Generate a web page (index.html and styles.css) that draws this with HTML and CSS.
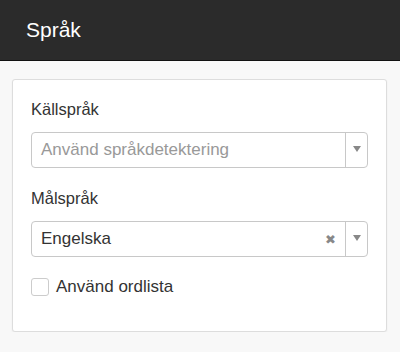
FILE: index.html
```html
<!DOCTYPE html>
<html lang="sv">
<head>
    <meta charset="UTF-8">
    <meta name="viewport" content="width=device-width, initial-scale=1.0">
    <title>Språk</title>
    <link rel="stylesheet" href="styles.css">
</head>
<body>

<div class="header">
    <h1 class="header-title">Språk</h1>
</div>

<div class="card">
    <!-- Källspråk -->
    <label class="field-label">Källspråk</label>
    <div class="select">
        <span class="select-value placeholder">Använd språkdetektering</span>
        <span class="select-arrow"></span>
    </div>

    <!-- Målspråk -->
    <label class="field-label">Målspråk</label>
    <div class="select">
        <span class="select-value">Engelska</span>
        <span class="select-clear">&#x2716;</span>
        <span class="select-arrow"></span>
    </div>

    <label class="check-row">
        <span class="checkbox"></span>
        <span>Använd ordlista</span>
    </label>
</div>

</body>
</html>
```

FILE: styles.css
```css
body {
    margin: 0;
    font-family: "Liberation Sans", Arial, sans-serif;
    background-color: #f8f8f8;
    color: #333;
}

.header {
    height: 60px;
    background-color: #2b2b2b;
    border-bottom: 1px solid #111;
    display: flex;
    align-items: center;
    padding-left: 26px;
}

.header-title {
    margin: 0;
    font-size: 21px;
    font-weight: normal;
    color: #fff;
}

.card {
    margin: 18px 13px 0 12px;
    padding: 18px 18px 34px 18px;
    background-color: #fff;
    border: 1px solid #ddd;
    border-radius: 3px;
    box-shadow: 0 1px 2px rgba(0, 0, 0, 0.06);
    display: flex;
    flex-direction: column;
}

.field-label {
    font-size: 16.5px;
    line-height: 22px;
    color: #333;
}

.select {
    margin-top: 12px;
    margin-bottom: 19px;
    height: 34px;
    border: 1px solid #c8c8c8;
    border-radius: 4px;
    display: flex;
    align-items: center;
}

.select-value {
    flex: 1;
    padding-left: 9px;
    font-size: 17px;
    color: #333;
}

.select-value.placeholder {
    color: #999;
}

.select-clear {
    width: 22px;
    text-align: center;
    font-size: 13px;
    color: #888;
    margin-right: 4px;
}

.select-arrow {
    width: 21px;
    height: 100%;
    border-left: 1px solid #c8c8c8;
    display: flex;
    align-items: center;
    justify-content: center;
}

.select-arrow::after {
    content: "";
    border-left: 4px solid transparent;
    border-right: 4px solid transparent;
    border-top: 6px solid #888;
    margin-top: -2px;
}

.check-row {
    margin-top: 1px;
    display: flex;
    align-items: center;
    gap: 7px;
    font-size: 17px;
    color: #333;
}

.checkbox {
    width: 16px;
    height: 16px;
    border: 1px solid #ccc;
    border-radius: 3px;
    background-color: #fff;
}
```
